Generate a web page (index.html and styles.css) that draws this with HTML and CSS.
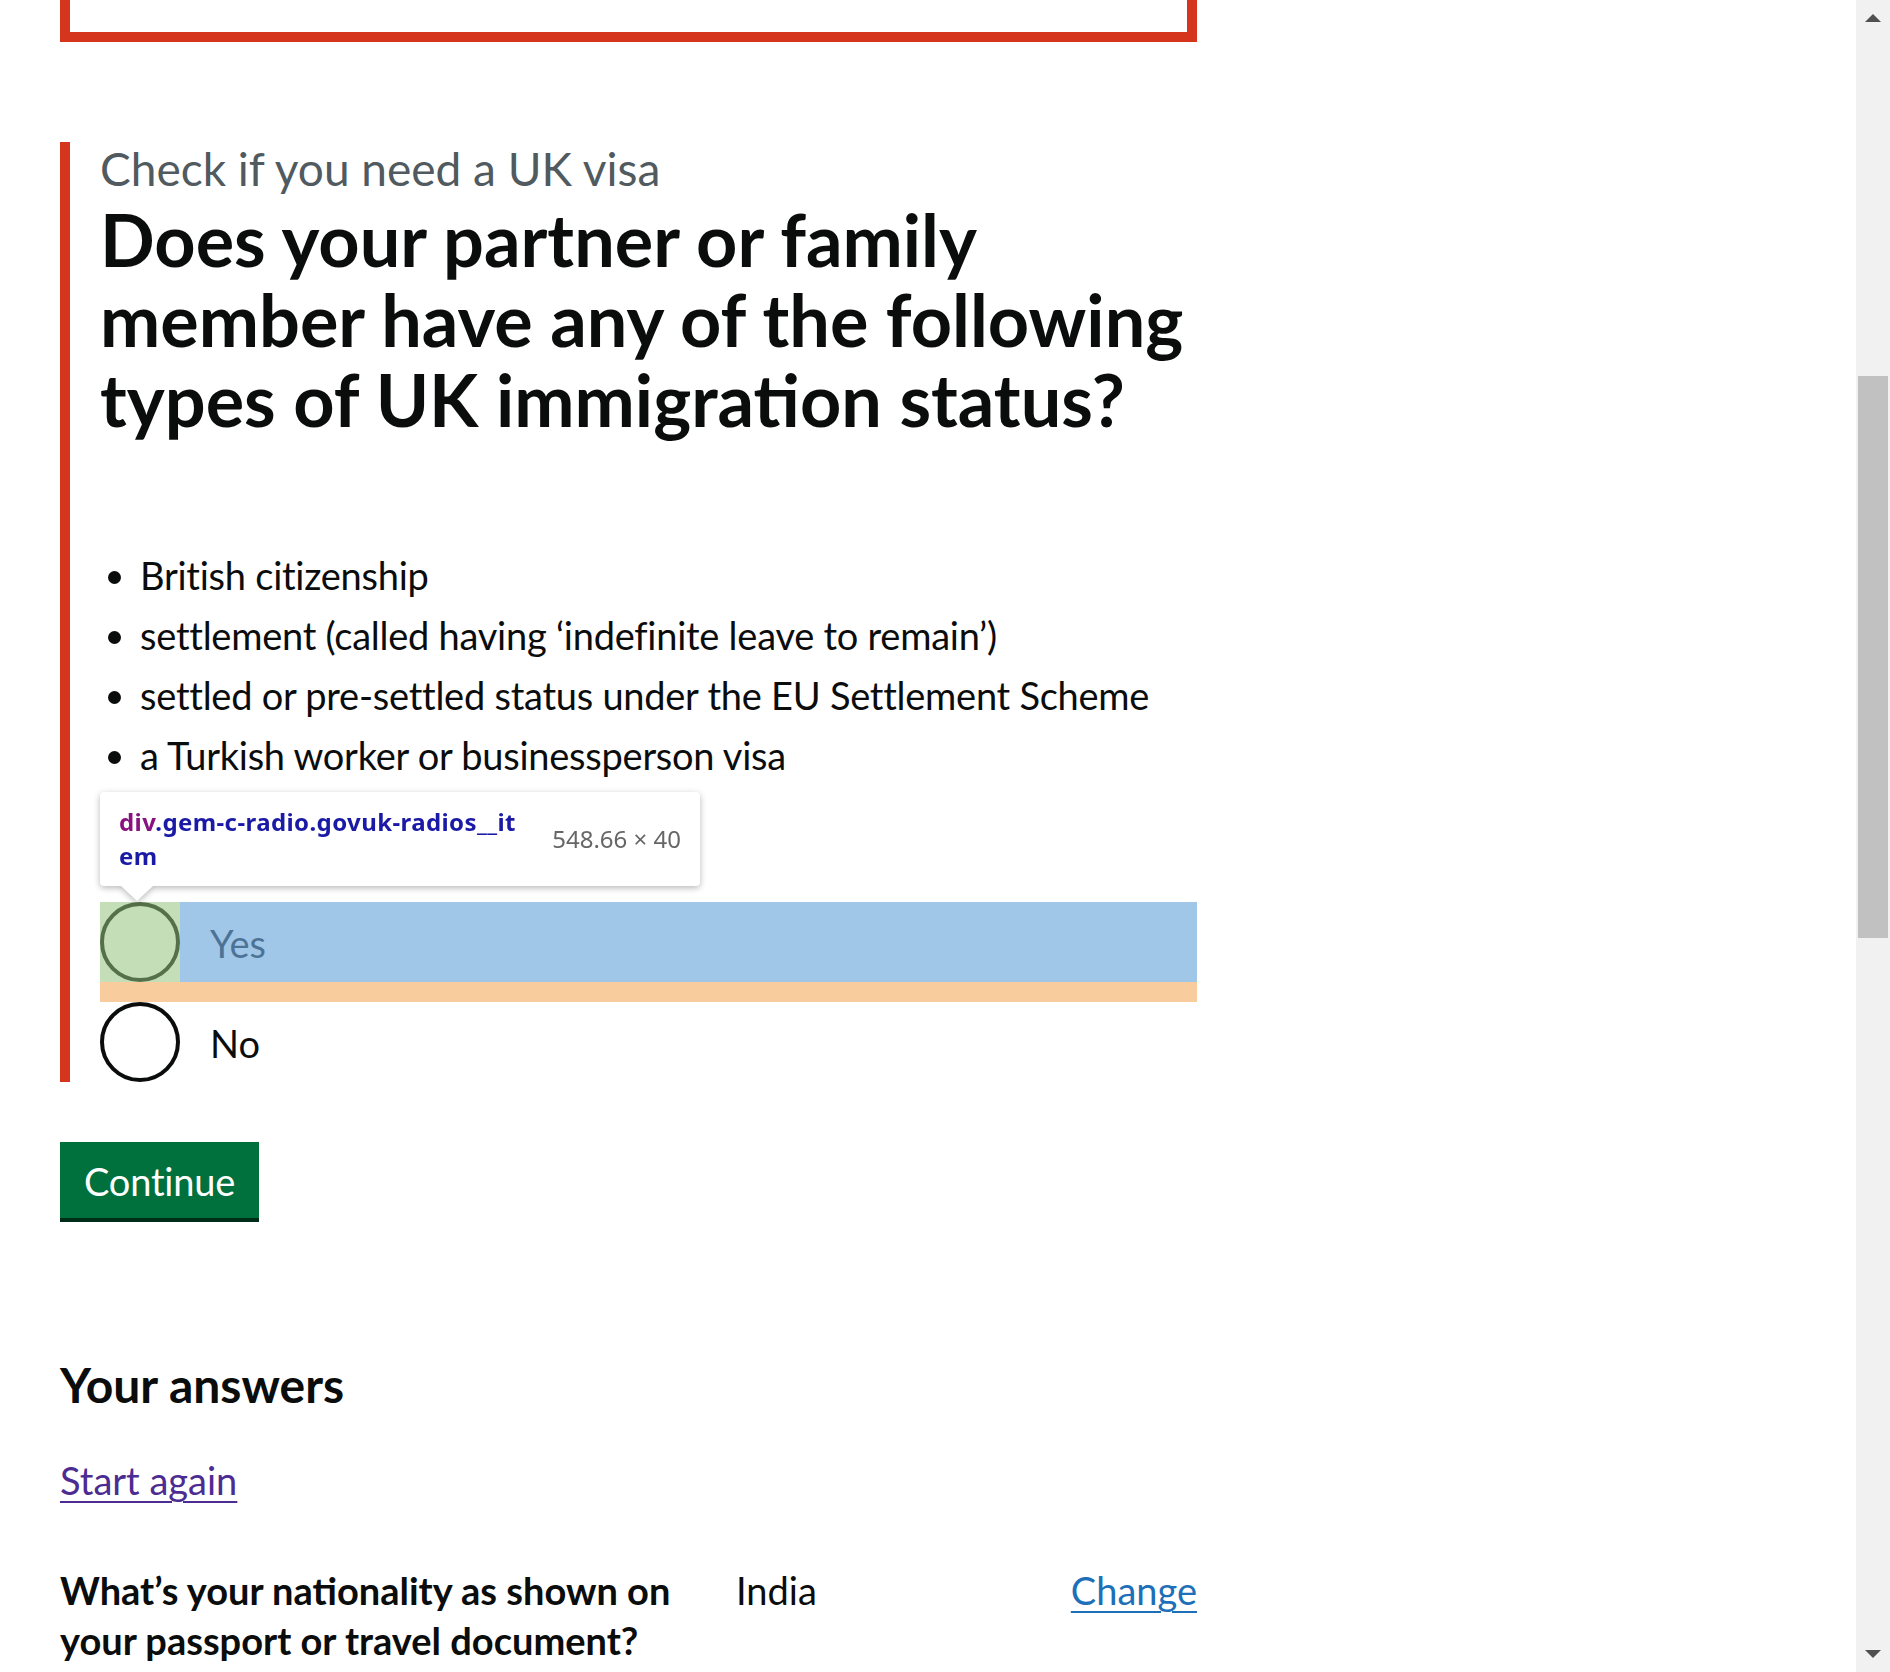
FILE: index.html
```html
<!DOCTYPE html>
<html lang="en">
<head>
<meta charset="utf-8">
<title>Check if you need a UK visa</title>
<link rel="stylesheet" href="styles.css">
</head>
<body>
<main class="page">
  <div class="error-summary"></div>

  <form class="form" action="#">
    <div class="form-group form-group--error">
      <div class="fieldset">
        <div class="legend">
          <span class="caption">Check if you need a UK visa</span>
          <h1 class="heading-l">Does your partner or family member have any of the following types of UK immigration status?</h1>
        </div>

        <ul class="list">
          <li>British citizenship</li>
          <li>settlement (called having ‘indefinite leave to remain’)</li>
          <li>settled or pre-settled status under the EU Settlement Scheme</li>
          <li>a Turkish worker or businessperson visa</li>
        </ul>

        <div class="radios">
          <div class="radio-item radio-item--inspected">
            <span class="radio-circle"></span>
            <label class="radio-label">Yes</label>
            <span class="hl hl-padding"></span>
            <span class="hl hl-content"></span>
            <span class="hl hl-margin"></span>
            <div class="inspect-tip">
              <div class="tip-name"><span class="tip-tag">div</span>.gem-c-radio.govuk-radios__it<br>em</div>
              <div class="tip-dims">548.66 × 40</div>
            </div>
          </div>
          <div class="radio-item">
            <span class="radio-circle"></span>
            <label class="radio-label">No</label>
          </div>
        </div>
      </div>
    </div>

    <button class="button" type="button">Continue</button>
  </form>

  <h2 class="heading-m">Your answers</h2>
  <p class="body"><a class="link link--visited" href="#">Start again</a></p>

  <dl class="summary-list">
    <div class="summary-row">
      <dt class="summary-key">What’s your nationality as shown on your passport or travel document?</dt>
      <dd class="summary-value">India</dd>
      <dd class="summary-actions"><a class="link" href="#">Change</a></dd>
    </div>
  </dl>
</main>

<div class="scrollbar">
  <span class="scroll-arrow scroll-arrow--up"></span>
  <span class="scroll-thumb"></span>
  <span class="scroll-arrow scroll-arrow--down"></span>
</div>
</body>
</html>
```

FILE: styles.css
```css
html {
  overflow: hidden;
}

body {
  margin: 0;
  background: #ffffff;
  color: #0b0c0c;
  font-family: Lato, "Liberation Sans", Arial, sans-serif;
}

.page {
  margin-left: 60px;
  width: 1137px;
}

.error-summary {
  height: 32px;
  border: 10px solid #d4351c;
  border-top: 0;
  margin-bottom: 100px;
}

.form-group {
  margin-bottom: 60px;
}

.form-group--error {
  border-left: 10px solid #d4351c;
  padding-left: 30px;
}

.fieldset {
  margin: 0;
  padding: 0;
}

.caption {
  display: block;
  font-size: 46px;
  line-height: 54px;
  color: #505a5f;
}

.heading-l {
  margin: 3px 0 0;
  font-size: 72px;
  line-height: 80px;
  font-weight: 700;
}

.list {
  margin: 111px 0 0;
  padding-left: 40px;
  list-style: disc;
  font-size: 38px;
  line-height: 50px;
  letter-spacing: -0.25px;
}

.list li {
  margin-bottom: 10px;
}

.list li:last-child {
  margin-bottom: 0;
}

.radios {
  margin-top: 122px;
}

.radio-item {
  position: relative;
  display: flex;
  min-height: 80px;
  margin-bottom: 20px;
}

.radio-item:last-child {
  margin-bottom: 0;
}

.radio-circle {
  flex: none;
  width: 80px;
  height: 80px;
  box-sizing: border-box;
  border: 4px solid #0b0c0c;
  border-radius: 50%;
}

.radio-label {
  padding: 16px 30px 10px;
  font-size: 38px;
  line-height: 50px;
}

/* devtools inspect highlight */
.hl {
  position: absolute;
}

.hl-padding {
  left: 0;
  top: 0;
  width: 80px;
  height: 80px;
  background: rgba(147, 196, 125, 0.55);
}

.hl-content {
  left: 80px;
  right: 0;
  top: 0;
  height: 80px;
  background: rgba(111, 168, 220, 0.66);
}

.hl-margin {
  left: 0;
  right: 0;
  top: 80px;
  height: 20px;
  background: rgba(246, 178, 107, 0.66);
}

.inspect-tip {
  position: absolute;
  left: 0;
  top: -110px;
  width: 600px;
  height: 94px;
  box-sizing: border-box;
  padding: 0 19px;
  display: flex;
  align-items: center;
  justify-content: space-between;
  background: #ffffff;
  border-radius: 4px;
  filter: drop-shadow(0 2px 3px rgba(0, 0, 0, 0.28));
  font-family: "Noto Sans", "Open Sans", sans-serif;
  font-size: 24px;
  z-index: 2;
}

.inspect-tip::after {
  content: "";
  position: absolute;
  left: 21px;
  top: 94px;
  border-left: 16px solid transparent;
  border-right: 16px solid transparent;
  border-top: 15px solid #ffffff;
}

.tip-name {
  font-weight: 700;
  line-height: 34px;
  letter-spacing: 0.4px;
  color: #1a1aa6;
  white-space: nowrap;
}

.tip-tag {
  color: #881280;
}

.tip-dims {
  color: #666666;
  line-height: 34px;
  white-space: nowrap;
}

.button {
  display: inline-block;
  margin: 0 0 64px;
  padding: 16px 20px 14px;
  border: 4px solid transparent;
  border-radius: 0;
  background: #00703c;
  box-shadow: 0 4px 0 #002d18;
  color: #ffffff;
  font-family: inherit;
  font-size: 38px;
  line-height: 38px;
  font-weight: 400;
  letter-spacing: -0.2px;
}

.heading-m {
  margin: 73px 0 40px;
  font-size: 48px;
  line-height: 60px;
  font-weight: 700;
}

.body {
  margin: 0 0 40px;
  font-size: 38px;
  line-height: 50px;
}

.link {
  color: #1d70b8;
  text-decoration: underline;
  text-decoration-thickness: 2px;
  text-underline-offset: 0.16em;
}

.link--visited {
  color: #4c2c92;
}

.summary-list {
  margin: 0;
}

.summary-row {
  display: grid;
  grid-template-columns: 636px 1fr auto;
  column-gap: 40px;
  padding-top: 20px;
  font-size: 38px;
  line-height: 50px;
}

.summary-key {
  font-weight: 700;
}

.summary-value,
.summary-actions {
  margin: 0;
}

/* window scrollbar */
.scrollbar {
  position: fixed;
  top: 0;
  right: 0;
  width: 34px;
  height: 100%;
  background: #f1f1f1;
}

.scroll-thumb {
  position: absolute;
  top: 376px;
  left: 2px;
  width: 30px;
  height: 562px;
  background: #c1c1c1;
}

.scroll-arrow {
  position: absolute;
  left: 9px;
  width: 0;
  height: 0;
  border-left: 8px solid transparent;
  border-right: 8px solid transparent;
}

.scroll-arrow--up {
  top: 14px;
  border-bottom: 8px solid #505050;
}

.scroll-arrow--down {
  bottom: 14px;
  border-top: 8px solid #505050;
}
```
